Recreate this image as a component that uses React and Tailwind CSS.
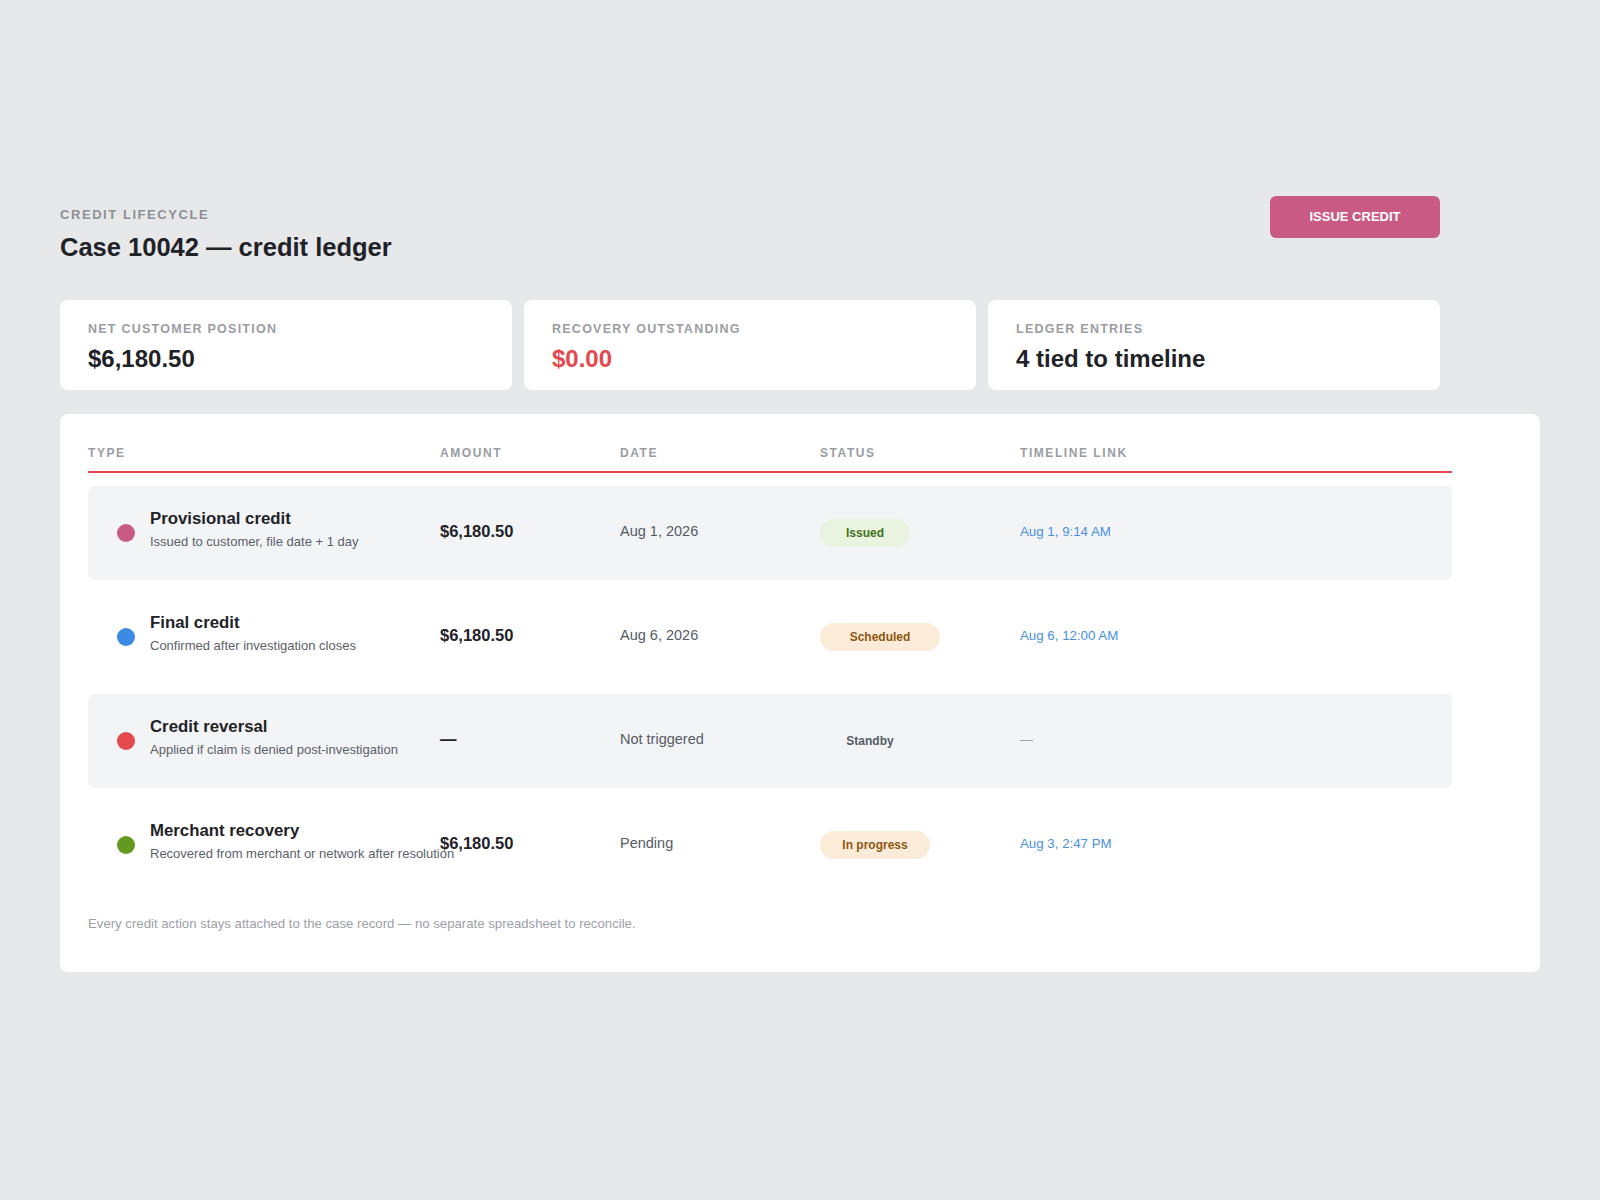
import React from 'react';

const rows = [
  {
    dot: 'bg-[#c85a84]',
    title: 'Provisional credit',
    sub: 'Issued to customer, file date + 1 day',
    amount: '$6,180.50',
    date: 'Aug 1, 2026',
    status: 'Issued',
    pill: 'w-[90px] bg-[#eaf3e0] text-[#3f7220]',
    link: 'Aug 1, 9:14 AM',
    shaded: true,
  },
  {
    dot: 'bg-[#3b8ae3]',
    title: 'Final credit',
    sub: 'Confirmed after investigation closes',
    amount: '$6,180.50',
    date: 'Aug 6, 2026',
    status: 'Scheduled',
    pill: 'w-[120px] bg-[#fbecda] text-[#8f5710]',
    link: 'Aug 6, 12:00 AM',
    shaded: false,
  },
  {
    dot: 'bg-[#e5484d]',
    title: 'Credit reversal',
    sub: 'Applied if claim is denied post-investigation',
    amount: '—',
    date: 'Not triggered',
    status: 'Standby',
    pill: 'w-[100px] bg-transparent text-[#555b65]',
    link: null,
    shaded: true,
  },
  {
    dot: 'bg-[#64991f]',
    title: 'Merchant recovery',
    sub: 'Recovered from merchant or network after resolution',
    amount: '$6,180.50',
    date: 'Pending',
    status: 'In progress',
    pill: 'w-[110px] bg-[#fbecda] text-[#8f5710]',
    link: 'Aug 3, 2:47 PM',
    shaded: false,
  },
];

const cols = 'grid grid-cols-[352px_180px_200px_200px_1fr] items-center';

function StatCard({ label, value, valueClass }) {
  return (
    <div className="bg-white rounded-lg h-[90px] px-[28px] pt-[21px]">
      <div className="text-[12.5px] leading-4 font-bold tracking-[0.1em] text-[#9a9da3]">
        {label}
      </div>
      <div className={`mt-[7px] text-[24px] leading-[30px] font-bold ${valueClass}`}>
        {value}
      </div>
    </div>
  );
}

export default function App() {
  return (
    <div className="min-h-screen bg-[#e7e8ea] font-['Liberation_Sans',Arial,sans-serif] px-[60px] pt-[196px] pb-[227px]">
      {/* Header */}
      <div className="w-[1380px] flex justify-between items-start">
        <div className="pt-[11px]">
          <div className="text-[13px] leading-4 font-bold tracking-[0.12em] text-[#8d9097]">
            CREDIT LIFECYCLE
          </div>
          <h1 className="mt-[9px] text-[25.5px] leading-[30px] font-bold text-[#1f2328]">
            Case 10042 — credit ledger
          </h1>
        </div>
        <button className="w-[170px] h-[42px] rounded-md bg-[#c85a84] text-white text-[13px] font-bold">
          ISSUE CREDIT
        </button>
      </div>

      {/* Stat cards */}
      <div className="w-[1380px] mt-[38px] grid grid-cols-3 gap-[12px]">
        <StatCard label="NET CUSTOMER POSITION" value="$6,180.50" valueClass="text-[#1f2328]" />
        <StatCard label="RECOVERY OUTSTANDING" value="$0.00" valueClass="text-[#e5484d]" />
        <StatCard label="LEDGER ENTRIES" value="4 tied to timeline" valueClass="text-[#1f2328]" />
      </div>

      {/* Ledger table */}
      <div className="mt-[24px] bg-white rounded-lg px-[28px] pt-[28px] pb-[39px]">
        <div className="w-[1364px]">
          <div className={`${cols} pt-[3px] pb-[10px] border-b-2 border-[#e5484d] text-[12px] leading-4 font-bold tracking-[0.13em] text-[#9a9da3]`}>
            <div>TYPE</div>
            <div>AMOUNT</div>
            <div>DATE</div>
            <div>STATUS</div>
            <div>TIMELINE LINK</div>
          </div>

          <div className="mt-[13px] flex flex-col gap-[10px]">
            {rows.map((r) => (
              <div
                key={r.title}
                className={`${cols} h-[94px] rounded-md ${r.shaded ? 'bg-[#f3f4f6]' : ''}`}
              >
                <div className="flex items-center pl-[29px] whitespace-nowrap">
                  <span className={`w-[18px] h-[18px] rounded-full shrink-0 ${r.dot}`} />
                  <div className="ml-[15px] pb-[7px]">
                    <div className="text-[16.8px] leading-[22px] font-bold text-[#1f2328]">
                      {r.title}
                    </div>
                    <div className="mt-[3px] text-[13px] leading-[18px] text-[#5b616b]">
                      {r.sub}
                    </div>
                  </div>
                </div>
                <div className="text-[16.5px] font-bold text-[#1f2328] pb-[4px]">{r.amount}</div>
                <div className="text-[14.5px] text-[#555b65] pb-[2px]">{r.date}</div>
                <div>
                  <span
                    className={`inline-flex items-center justify-center h-[28px] rounded-full text-[12px] font-bold ${r.pill}`}
                  >
                    {r.status}
                  </span>
                </div>
                <div className="pb-[4px]">
                  {r.link ? (
                    <span className="text-[13.3px] text-[#4a90e2]">{r.link}</span>
                  ) : (
                    <span className="text-[13px] text-[#a0a4aa]">—</span>
                  )}
                </div>
              </div>
            ))}
          </div>
        </div>

        <p className="mt-[23px] text-[13.2px] leading-[18px] text-[#9da1a7]">
          Every credit action stays attached to the case record — no separate spreadsheet to reconcile.
        </p>
      </div>
    </div>
  );
}
